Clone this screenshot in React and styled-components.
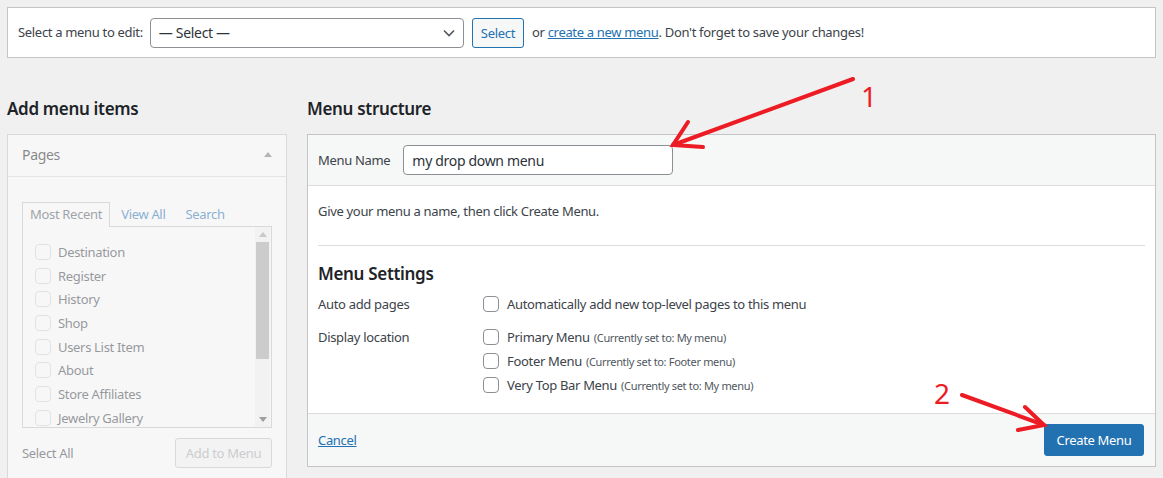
import React from 'react';
import styled, { createGlobalStyle } from 'styled-components';

const GlobalStyle = createGlobalStyle`
  html, body {
    margin: 0;
    padding: 0;
    background: #f0f0f1;
    font-family: "Noto Sans", "Open Sans", sans-serif;
    font-size: 13px;
    letter-spacing: -0.32px;
    color: #3c434a;
    overflow: hidden;
  }
`;

// Page frame
const Page = styled.div`
  position: relative;
  width: 1163px;
  height: 478px;
  padding: 7px;
  box-sizing: border-box;
  overflow: hidden;
`;

const TopBar = styled.div`
  display: flex;
  align-items: center;
  height: 49px;
  padding: 0 10px;
  background: #fff;
  border: 1px solid #c3c4c7;
  white-space: nowrap;
`;

const Label = styled.span`
  color: #3c434a;
  line-height: 19px;
`;

const SelectBox = styled.div`
  display: flex;
  align-items: center;
  justify-content: space-between;
  width: 314px;
  height: 30px;
  margin-left: 7px;
  padding: 0 8px;
  box-sizing: border-box;
  border: 1px solid #8c8f94;
  border-radius: 4px;
  background: #fff;
  font-size: 14px;
  color: #2c3338;
`;

const Button = styled.button`
  height: ${(p) => (p.$primary ? '32px' : '30px')};
  padding: 0 ${(p) => (p.$primary ? '10px' : '8px')};
  border-radius: 3px;
  border: 1px solid ${(p) => (p.$primary ? '#2271b1' : p.$disabled ? '#c3c4c7' : '#2271b1')};
  background: ${(p) => (p.$primary ? '#2271b1' : '#f6f7f7')};
  color: ${(p) => (p.$primary ? '#fff' : p.$disabled ? '#a7aaad' : '#2271b1')};
  font-family: inherit;
  font-size: 13px;
  letter-spacing: inherit;
  white-space: nowrap;
  cursor: pointer;
`;

const Link = styled.a`
  color: #2271b1;
  text-decoration: underline;
`;

const Columns = styled.div`
  display: flex;
  gap: 20px;
  margin-top: 40px;
`;

const LeftCol = styled.div`
  width: 280px;
  flex-shrink: 0;
`;

const RightCol = styled.div`
  flex: 1;
`;

const Heading = styled.h2`
  margin: 0 0 14px;
  font-size: 17px;
  line-height: 22px;
  font-weight: 600;
  color: #1d2327;
`;

// Left "Pages" box, faded because no menu is selected yet
const Postbox = styled.div`
  opacity: 0.5;
  background: #fff;
  border: 1px solid #c3c4c7;
  height: 360px;
`;

const PostboxHeader = styled.div`
  display: flex;
  align-items: center;
  justify-content: space-between;
  height: 42px;
  padding: 0 14px 3px;
  box-sizing: border-box;
  border-bottom: 1px solid #dcdcde;
  font-size: 14px;
  color: #1d2327;
`;

const UpArrow = styled.span`
  width: 0;
  height: 0;
  border-left: 4px solid transparent;
  border-right: 4px solid transparent;
  border-bottom: 5px solid ${(p) => p.$color || '#787c82'};
`;

const DownArrow = styled.span`
  width: 0;
  height: 0;
  border-left: 4px solid transparent;
  border-right: 4px solid transparent;
  border-top: 5px solid ${(p) => p.$color || '#787c82'};
`;

const PostboxBody = styled.div`
  padding: 24px 14px 0;
`;

const Tabs = styled.div`
  display: flex;
  align-items: flex-end;
`;

const Tab = styled.span`
  display: flex;
  align-items: center;
  height: 25px;
  padding: 0 ${(p) => (p.$active ? '7px' : '0')} 3px;
  box-sizing: border-box;
  margin-left: ${(p) => (p.$active ? '0' : '10px')};
  margin-right: ${(p) => (p.$active ? '0' : '8px')};
  border: 1px solid ${(p) => (p.$active ? '#c3c4c7' : 'transparent')};
  border-bottom: none;
  color: ${(p) => (p.$active ? '#50575e' : '#2271b1')};
  background: ${(p) => (p.$active ? '#fff' : 'transparent')};
  position: relative;
  top: 1px;
`;

const TabPanel = styled.div`
  display: flex;
  height: 200px;
  border: 1px solid #c3c4c7;
  overflow: hidden;
`;

const PageList = styled.ul`
  flex: 1;
  margin: 0;
  padding: 13px 0 0 12px;
  list-style: none;
`;

const PageItem = styled.li`
  display: flex;
  align-items: center;
  gap: 7px;
  height: 23.7px;
  color: #3c434a;
`;

const Checkbox = styled.span`
  display: inline-block;
  width: 16px;
  height: 16px;
  box-sizing: border-box;
  border: 1px solid ${(p) => (p.$muted ? '#d6d6d8' : '#8c8f94')};
  border-radius: 4px;
  background: #fff;
  flex-shrink: 0;
`;

const Scrollbar = styled.div`
  display: flex;
  flex-direction: column;
  align-items: center;
  width: 15px;
  margin-right: 1px;
  background: #f4f4f4;
`;

const ScrollBtn = styled.div`
  display: flex;
  align-items: center;
  justify-content: center;
  width: 15px;
  height: 15px;
`;

const Thumb = styled.div`
  width: 13px;
  height: 117px;
  background: #a9a9a9;
`;

const ScrollSpace = styled.div`
  flex: 1;
`;

const BoxFooter = styled.div`
  display: flex;
  align-items: center;
  justify-content: space-between;
  padding: 10px 0 0 0;
  height: 30px;
  color: #3c434a;
`;

// Right "Menu structure" box
const MenuBox = styled.div`
  background: #fff;
  border: 1px solid #c3c4c7;
`;

const MenuHeader = styled.div`
  display: flex;
  align-items: center;
  height: 50px;
  padding: 0 10px;
  background: #f6f7f7;
  border-bottom: 1px solid #dcdcde;
`;

const TextInput = styled.div`
  display: flex;
  align-items: center;
  width: 270px;
  height: 30px;
  margin-left: 13px;
  padding: 0 8px;
  box-sizing: border-box;
  border: 1px solid #8c8f94;
  border-radius: 4px;
  background: #fff;
  font-size: 14px;
  color: #2c3338;
`;

const MenuBody = styled.div`
  padding: 16px 10px 16px;
`;

const Hint = styled.p`
  margin: 0;
  line-height: 19px;
`;

const Divider = styled.hr`
  margin: 24px 0 0;
  border: none;
  border-top: 1px solid #dcdcde;
`;

const SubHeading = styled.h3`
  margin: 17px 0 7px;
  font-size: 17px;
  line-height: 22px;
  font-weight: 600;
  color: #1d2327;
`;

const SettingsGrid = styled.div`
  display: grid;
  grid-template-columns: 165px 1fr;
  row-gap: 9px;
  line-height: 24px;
`;

const OptionList = styled.div`
  display: flex;
  flex-direction: column;
`;

const Option = styled.label`
  display: flex;
  align-items: center;
  gap: 8px;
  height: 24px;
  color: #3c434a;
`;

const Note = styled.span`
  font-size: 11px;
  color: #50575e;
  margin-left: 4px;
`;

const MenuFooter = styled.div`
  display: flex;
  align-items: center;
  justify-content: space-between;
  height: 52px;
  padding: 0 11px 0 10px;
  background: #f6f7f7;
  border-top: 1px solid #dcdcde;
`;

// Red annotations drawn over the screenshot
const Overlay = styled.svg`
  position: absolute;
  left: 0;
  top: 0;
  pointer-events: none;
`;

const Number = styled.span`
  position: absolute;
  left: ${(p) => p.$x}px;
  top: ${(p) => p.$y}px;
  font-size: 28px;
  line-height: 1;
  letter-spacing: 0;
  color: #ed1c24;
  font-family: "Noto Sans", sans-serif;
`;

const pages = [
  'Destination',
  'Register',
  'History',
  'Shop',
  'Users List Item',
  'About',
  'Store Affiliates',
  'Jewelry Gallery',
];

const locations = [
  ['Primary Menu', '(Currently set to: My menu)'],
  ['Footer Menu', '(Currently set to: Footer menu)'],
  ['Very Top Bar Menu', '(Currently set to: My menu)'],
];

export default function App() {
  return (
    <Page>
      <GlobalStyle />
      <TopBar>
        <Label>Select a menu to edit:</Label>
        <SelectBox>
          <span>— Select —</span>
          <svg width="12" height="8" viewBox="0 0 12 8">
            <path d="M1 1.5 L6 6.5 L11 1.5" fill="none" stroke="#50575e" strokeWidth="1.6" />
          </svg>
        </SelectBox>
        <Button style={{ marginLeft: 8 }}>Select</Button>
        <Label style={{ marginLeft: 8 }}>
          or <Link href="#">create a new menu</Link>. Don't forget to save your changes!
        </Label>
      </TopBar>

      <Columns>
        <LeftCol>
          <Heading>Add menu items</Heading>
          <Postbox>
            <PostboxHeader>
              <span>Pages</span>
              <UpArrow />
            </PostboxHeader>
            <PostboxBody>
              <Tabs>
                <Tab $active>Most Recent</Tab>
                <Tab>View All</Tab>
                <Tab>Search</Tab>
              </Tabs>
              <TabPanel>
                <PageList>
                  {pages.map((p) => (
                    <PageItem key={p}>
                      <Checkbox $muted />
                      {p}
                    </PageItem>
                  ))}
                </PageList>
                <Scrollbar>
                  <ScrollBtn>
                    <UpArrow $color="#a3a3a3" />
                  </ScrollBtn>
                  <Thumb />
                  <ScrollSpace />
                  <ScrollBtn>
                    <DownArrow $color="#505050" />
                  </ScrollBtn>
                </Scrollbar>
              </TabPanel>
              <BoxFooter>
                <span>Select All</span>
                <Button $disabled style={{ width: 97 }}>Add to Menu</Button>
              </BoxFooter>
            </PostboxBody>
          </Postbox>
        </LeftCol>

        <RightCol>
          <Heading>Menu structure</Heading>
          <MenuBox>
            <MenuHeader>
              <Label>Menu Name</Label>
              <TextInput>my drop down menu</TextInput>
            </MenuHeader>
            <MenuBody>
              <Hint>Give your menu a name, then click Create Menu.</Hint>
              <Divider />
              <SubHeading>Menu Settings</SubHeading>
              <SettingsGrid>
                <span>Auto add pages</span>
                <Option>
                  <Checkbox />
                  Automatically add new top-level pages to this menu
                </Option>
                <span>Display location</span>
                <OptionList>
                  {locations.map(([name, note]) => (
                    <Option key={name}>
                      <Checkbox />
                      <span>
                        {name}
                        <Note>{note}</Note>
                      </span>
                    </Option>
                  ))}
                </OptionList>
              </SettingsGrid>
            </MenuBody>
            <MenuFooter>
              <Link href="#">Cancel</Link>
              <Button $primary style={{ width: 100 }}>Create Menu</Button>
            </MenuFooter>
          </MenuBox>
        </RightCol>
      </Columns>

      <Overlay width="1163" height="478" viewBox="0 0 1163 478">
        <g stroke="#ed1c24" strokeWidth="4" strokeLinecap="round" fill="none">
          <path d="M853 79 L673 145" />
          <path d="M688 122 L673 145 L703 147" />
          <path d="M962 395 L1044 425" />
          <path d="M1025 407 L1044 425 L1018 430" />
        </g>
      </Overlay>
      <Number $x={861} $y={82}>1</Number>
      <Number $x={934} $y={379}>2</Number>
    </Page>
  );
}
